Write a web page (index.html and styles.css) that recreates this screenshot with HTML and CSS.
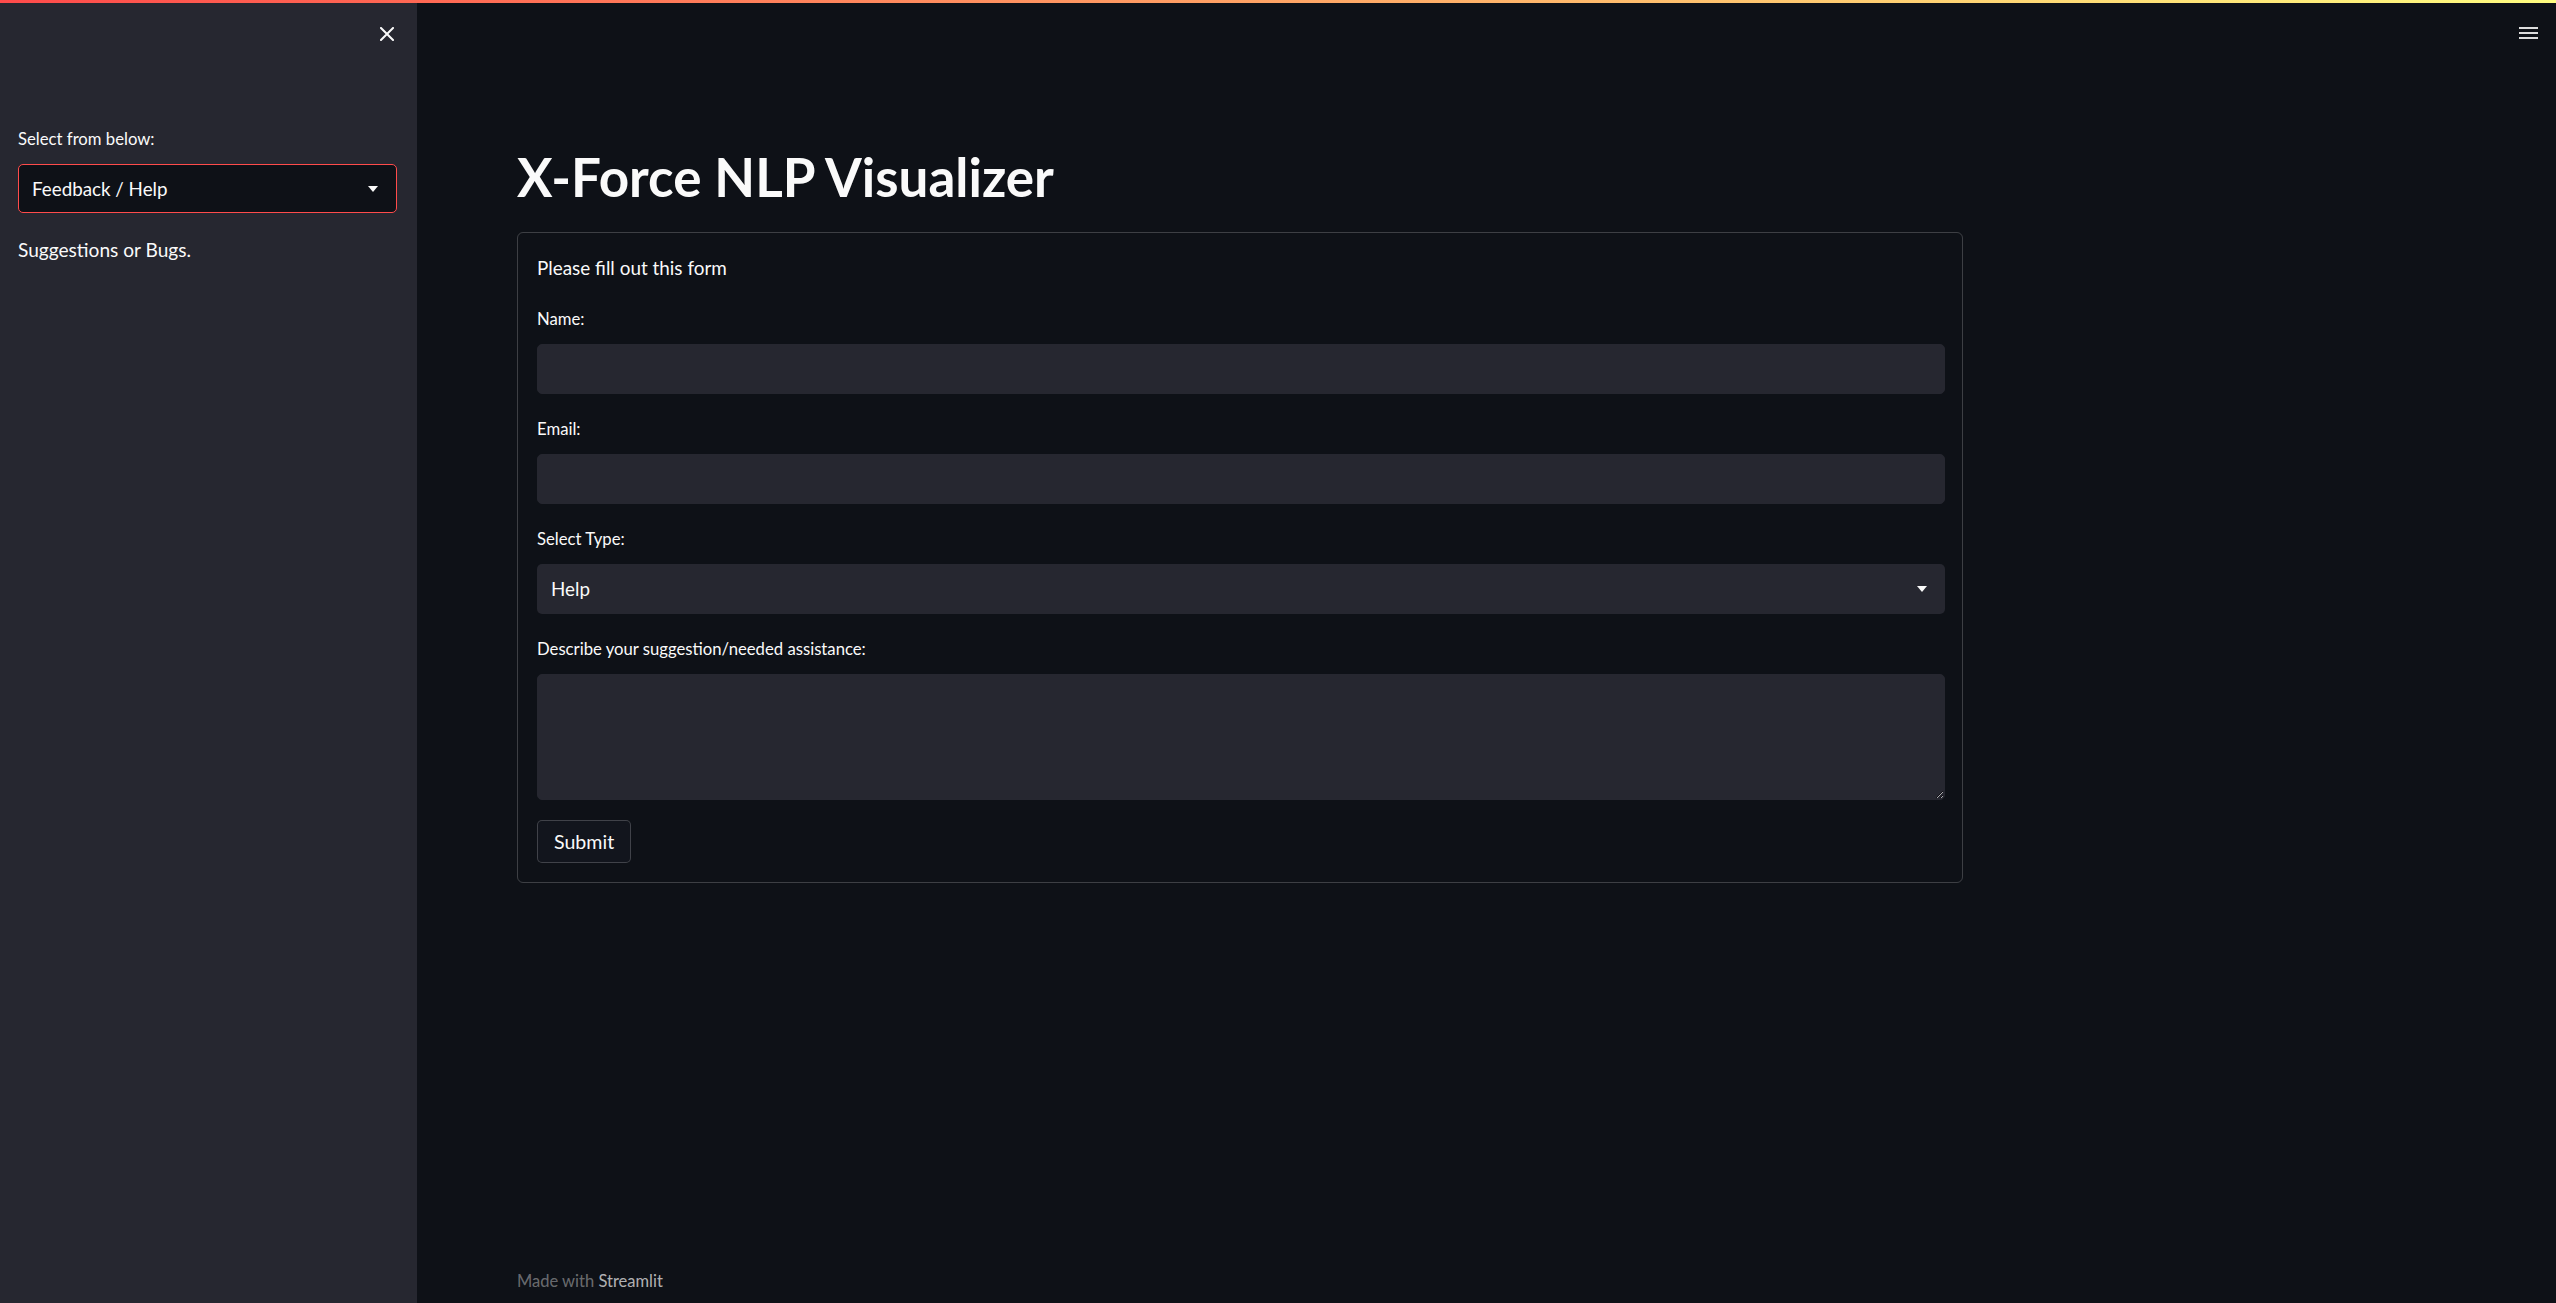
FILE: index.html
```html
<!DOCTYPE html>
<html lang="en">
<head>
<meta charset="utf-8">
<title>X-Force NLP Visualizer</title>
<link rel="stylesheet" href="styles.css">
</head>
<body>
<div class="decoration"></div>
<div class="app">
  <aside class="sidebar">
    <div class="sidebar-head">
      <button class="icon-btn close-btn" aria-label="Close sidebar">
        <svg width="14" height="14" viewBox="0 0 14 14"><path d="M1 1L13 13M13 1L1 13" stroke="#fafafa" stroke-width="2" stroke-linecap="square"/></svg>
      </button>
    </div>
    <label class="widget-label side-label">Select from below:</label>
    <div class="select select-side">
      <span class="select-value">Feedback / Help</span>
      <span class="caret"></span>
    </div>
    <p class="side-text">Suggestions or Bugs.</p>
  </aside>
  <main class="main">
    <div class="toolbar">
      <button class="icon-btn menu-btn" aria-label="Menu">
        <span></span><span></span><span></span>
      </button>
    </div>
    <div class="block">
      <h1 class="title">X-Force NLP Visualizer</h1>
      <form class="form">
        <p class="form-intro">Please fill out this form</p>
        <div class="field">
          <label class="widget-label">Name:</label>
          <input class="text-input" type="text">
        </div>
        <div class="field">
          <label class="widget-label">Email:</label>
          <input class="text-input" type="text">
        </div>
        <div class="field">
          <label class="widget-label">Select Type:</label>
          <div class="select select-main">
            <span class="select-value">Help</span>
            <span class="caret"></span>
          </div>
        </div>
        <div class="field">
          <label class="widget-label">Describe your suggestion/needed assistance:</label>
          <textarea class="text-area"></textarea>
        </div>
        <div class="actions">
          <button type="button" class="submit-btn">Submit</button>
        </div>
      </form>
    </div>
    <footer class="footer">Made with <span class="footer-link">Streamlit</span></footer>
  </main>
</div>
</body>
</html>
```

FILE: styles.css
```css
* { box-sizing: border-box; }
html, body {
  margin: 0;
  padding: 0;
  height: 1303px;
  background: #0e1117;
  color: #fafafa;
  font-family: "Lato", "Open Sans", sans-serif;
  overflow: hidden;
}
.decoration {
  position: absolute;
  top: 0; left: 0; right: 0;
  height: 3px;
  background: linear-gradient(90deg, #ff4b4b, #fffd80);
  z-index: 10;
}
.app {
  display: flex;
  height: 1303px;
}
.sidebar {
  width: 417px;
  flex: none;
  background: #262730;
  padding: 0 20px 0 18px;
  display: flex;
  flex-direction: column;
}
.sidebar-head {
  height: 67px;
  display: flex;
  align-items: center;
  justify-content: flex-end;
  padding-right: 3px;
  margin-bottom: 60px;
}
.icon-btn {
  background: none;
  border: none;
  padding: 0;
  margin: 0;
  display: flex;
  align-items: center;
  justify-content: center;
  cursor: pointer;
}
.close-btn { width: 14px; height: 14px; }
.widget-label {
  display: block;
  font-size: 16.7px;
  line-height: 24px;
  height: 24px;
  margin-bottom: 13px;
  color: #fafafa;
}
.select {
  height: 50px;
  border-radius: 5px;
  display: flex;
  align-items: center;
  justify-content: space-between;
  padding: 0 18px 0 13px;
}
.select-side {
  height: 49px;
  background: #0e1117;
  border: 1px solid #ff4b4b;
}
.select-main {
  background: #262730;
  padding-left: 14px;
}
.select-value {
  font-size: 18.8px;
  line-height: 24px;
}
.caret {
  width: 0;
  height: 0;
  border-left: 5.5px solid transparent;
  border-right: 5.5px solid transparent;
  border-top: 6px solid #fafafa;
}
.side-text {
  margin: 23px 0 0;
  font-size: 19.1px;
  line-height: 28px;
}
.main {
  flex: 1;
  display: flex;
  flex-direction: column;
  padding-left: 100px;
}
.toolbar {
  height: 65px;
  display: flex;
  align-items: center;
  justify-content: flex-end;
  padding-right: 18px;
}
.menu-btn {
  width: 19px;
  flex-direction: column;
  gap: 3px;
}
.menu-btn span {
  display: block;
  width: 19px;
  height: 2px;
  background: #dcdcdc;
}
.block {
  width: 1446px;
  margin-top: 82px;
}
.title {
  margin: 0 0 25px;
  font-size: 53px;
  line-height: 60px;
  font-weight: 700;
  color: #fafafa;
}
.form {
  border: 1px solid rgba(250, 250, 250, 0.2);
  border-radius: 6px;
  padding: 21px 17px 19px 19px;
  display: flex;
  flex-direction: column;
  gap: 23px;
}
.form-intro {
  margin: 0 0 2px;
  font-size: 18.9px;
  line-height: 28px;
}
.field {
  display: flex;
  flex-direction: column;
}
.text-input {
  height: 50px;
  background: #262730;
  border: 1px solid #262730;
  border-radius: 5px;
  color: #fafafa;
  font: inherit;
  font-size: 20px;
  outline: none;
}
.text-area {
  height: 126px;
  background: #262730;
  border: 1px solid #262730;
  border-radius: 5px;
  color: #fafafa;
  font: inherit;
  resize: vertical;
  color-scheme: dark;
  outline: none;
}
.actions {
  margin-top: -3px;
  display: flex;
}
.submit-btn {
  height: 43px;
  padding: 0 16px;
  background: #12151d;
  border: 1px solid rgba(250, 250, 250, 0.2);
  border-radius: 5px;
  color: #fafafa;
  font-family: inherit;
  font-size: 19.6px;
  line-height: 24px;
}
.footer {
  margin-top: auto;
  padding-bottom: 12px;
  font-size: 16.5px;
  line-height: 20px;
  color: rgba(250, 250, 250, 0.4);
}
.footer-link {
  color: rgba(250, 250, 250, 0.7);
}
```
